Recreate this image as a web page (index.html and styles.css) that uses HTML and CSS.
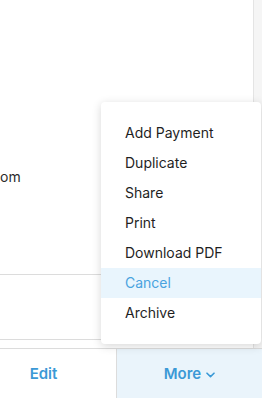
FILE: index.html
```html
<!DOCTYPE html>
<html lang="en">
<head>
  <meta charset="UTF-8" />
  <title>Invoice - Actions</title>
  <link rel="stylesheet" href="styles.css">
</head>
<body>
  <div class="page">
    <div class="content">
      <div class="section section-info">
        <div class="info-row">om</div>
      </div>
      <div class="section section-notes"></div>
    </div>

    <!-- Bottom action bar -->
    <div class="action-bar">
      <button class="action action-edit">Edit</button>
      <button class="action action-more">
        More
        <svg class="chevron" width="9" height="6" viewBox="0 0 9 6">
          <path d="M1 1.2 L4.5 4.6 L8 1.2" fill="none" stroke="currentColor" stroke-width="1.6" stroke-linecap="round" stroke-linejoin="round"/>
        </svg>
      </button>
    </div>

    <!-- More menu -->
    <ul class="menu">
      <li class="menu-item">Add Payment</li>
      <li class="menu-item">Duplicate</li>
      <li class="menu-item">Share</li>
      <li class="menu-item">Print</li>
      <li class="menu-item">Download PDF</li>
      <li class="menu-item active">Cancel</li>
      <li class="menu-item">Archive</li>
    </ul>
  </div>
</body>
</html>
```

FILE: styles.css
```css
body {
  margin: 0;
  font-family: Inter, 'Noto Sans', sans-serif;
  background-color: #f5f5f5;
  color: #222;
}

.page {
  position: relative;
  width: 262px;
  height: 398px;
  overflow: hidden;
  display: flex;
  flex-direction: column;
}

.content {
  width: 253px;
  height: 348px;
  background: white;
  border-right: 1px solid #e4e4e4;
}

.section-info {
  height: 275px;
  border-bottom: 1px solid #dcdcdc;
  padding-top: 168px;
  box-sizing: border-box;
}

.info-row {
  font-size: 14px;
  color: #2b2b2b;
}

.section-notes {
  height: 64px;
  border-bottom: 1px solid #dcdcdc;
}

.action-bar {
  display: grid;
  grid-template-columns: 117px 1fr;
  height: 49px;
  border-top: 1px solid #dcdcdc;
  background: white;
}

.action {
  border: none;
  background: white;
  font-family: inherit;
  font-size: 15px;
  font-weight: 600;
  color: #3b99d6;
  display: flex;
  align-items: center;
  justify-content: center;
  gap: 5px;
  padding: 0;
  cursor: pointer;
}

.action-edit {
  padding-right: 29px;
  border-right: 1px solid #dcdcdc;
}

.action-more {
  background-color: #eaf4fb;
}

.chevron {
  margin-top: 2px;
}

.menu {
  position: absolute;
  left: 101px;
  top: 102px;
  width: 160px;
  margin: 0;
  padding: 16px 0;
  list-style: none;
  background: white;
  border-radius: 4px;
  box-shadow: 0 2px 10px rgba(0,0,0,0.16);
}

.menu-item {
  height: 30px;
  line-height: 30px;
  padding-left: 24px;
  font-size: 14px;
  color: #1f1f1f;
}

.menu-item.active {
  background-color: #e9f5fd;
  color: #4aa3df;
}
```
